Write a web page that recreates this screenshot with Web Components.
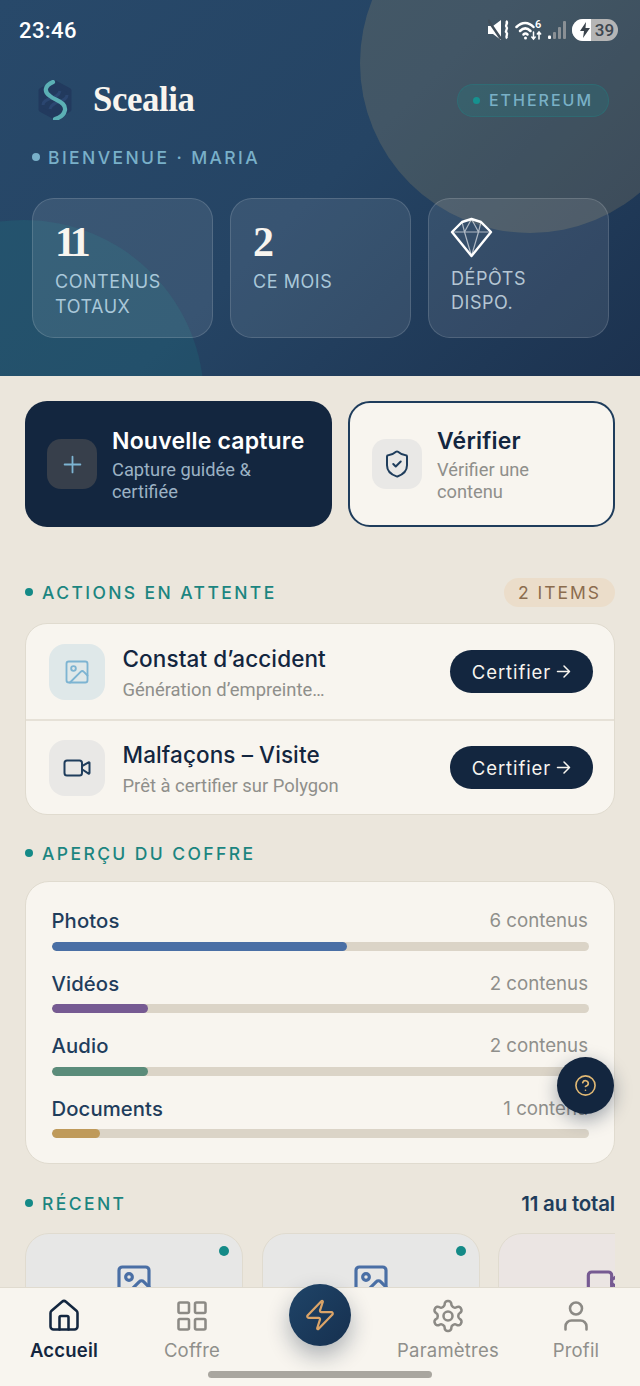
<!DOCTYPE html>
<html lang="fr">
<head>
<meta charset="utf-8">
<title>Scealia</title>
<style>
  html, body { margin: 0; padding: 0; background: #ebe6dc; }
  body { width: 640px; height: 1386px; overflow: hidden; font-family: Inter, sans-serif; }
  sc-actions { margin-top: 25px; }
  sc-section-head.first { margin-top: 51px; }
  sc-section-head.next { margin-top: 24px; }
  sc-section-head.last { margin-top: 25px; }
</style>
</head>
<body>
<sc-shell>
  <sc-hero slot="hero">
    <sc-stat value="11">CONTENUS<br>TOTAUX</sc-stat>
    <sc-stat value="2">CE MOIS</sc-stat>
    <sc-stat gem>DÉPÔTS<br>DISPO.</sc-stat>
  </sc-hero>

  <sc-actions>
    <sc-action variant="dark" icon="plus" title="Nouvelle capture">Capture guidée &amp;<br>certifiée</sc-action>
    <sc-action variant="light" icon="shield" title="Vérifier">Vérifier une<br>contenu</sc-action>
  </sc-actions>

  <sc-section-head class="first" label="ACTIONS EN ATTENTE"><sc-chip>2 ITEMS</sc-chip></sc-section-head>
  <sc-card class="pending">
    <sc-pending icon="image" tone="blue" title="Constat d’accident" sub="Génération d’empreinte…"></sc-pending>
    <sc-pending icon="video" tone="grey" title="Malfaçons – Visite" sub="Prêt à certifier sur Polygon" divided></sc-pending>
  </sc-card>

  <sc-section-head class="next" label="APERÇU DU COFFRE"></sc-section-head>
  <sc-vault>
    <sc-bar label="Photos" count="6 contenus" pct="55" color="#4a6fa5"></sc-bar>
    <sc-bar label="Vidéos" count="2 contenus" pct="18" color="#765a92"></sc-bar>
    <sc-bar label="Audio" count="2 contenus" pct="18" color="#5b8c7a"></sc-bar>
    <sc-bar label="Documents" count="1 contenu" pct="9" color="#bf9a5a"></sc-bar>
  </sc-vault>

  <sc-section-head class="last" label="RÉCENT"><sc-total>11 au total</sc-total></sc-section-head>
  <sc-recent>
    <sc-thumb icon="image" color="#4a6fa5" bg="#e7e7e6" dot></sc-thumb>
    <sc-thumb icon="image" color="#4a6fa5" bg="#e7e7e6" dot></sc-thumb>
    <sc-thumb icon="video" color="#765a92" bg="#ebe5e3" nudge="4"></sc-thumb>
  </sc-recent>

  <sc-help slot="overlay"></sc-help>
  <sc-nav slot="nav"></sc-nav>
</sc-shell>

<script>
const ICONS = {
  plus: '<path d="M5 12h14"/><path d="M12 5v14"/>',
  shield: '<path d="M20 13c0 5-3.5 7.5-7.66 8.95a1 1 0 0 1-.67-.01C7.5 20.5 4 18 4 13V6a1 1 0 0 1 1-1c2 0 4.5-1.2 6.24-2.72a1.17 1.17 0 0 1 1.52 0C14.51 3.81 17 5 19 5a1 1 0 0 1 1 1z"/><path d="m9 12 2 2 4-4"/>',
  image: '<rect x="3" y="3" width="18" height="18" rx="2"/><circle cx="9" cy="9" r="2"/><path d="m21 15-3.086-3.086a2 2 0 0 0-2.828 0L6 21"/>',
  video: '<path d="m16 13 5.223 3.482a.5.5 0 0 0 .777-.416V7.87a.5.5 0 0 0-.752-.432L16 10.5"/><rect x="2" y="6" width="14" height="12" rx="2"/>',
  home: '<path d="M15 21v-8a1 1 0 0 0-1-1h-4a1 1 0 0 0-1 1v8"/><path d="M3 10a2 2 0 0 1 .709-1.528l7-5.999a2 2 0 0 1 2.582 0l7 5.999A2 2 0 0 1 21 10v9a2 2 0 0 1-2 2H5a2 2 0 0 1-2-2z"/>',
  grid: '<rect x="3" y="3" width="7" height="7" rx="1"/><rect x="14" y="3" width="7" height="7" rx="1"/><rect x="14" y="14" width="7" height="7" rx="1"/><rect x="3" y="14" width="7" height="7" rx="1"/>',
  gear: '<path d="M12.22 2h-.44a2 2 0 0 0-2 2v.18a2 2 0 0 1-1 1.73l-.43.25a2 2 0 0 1-2 0l-.15-.08a2 2 0 0 0-2.73.73l-.22.38a2 2 0 0 0 .73 2.73l.15.1a2 2 0 0 1 1 1.72v.51a2 2 0 0 1-1 1.74l-.15.09a2 2 0 0 0-.73 2.73l.22.38a2 2 0 0 0 2.73.73l.15-.08a2 2 0 0 1 2 0l.43.25a2 2 0 0 1 1 1.73V20a2 2 0 0 0 2 2h.44a2 2 0 0 0 2-2v-.18a2 2 0 0 1 1-1.73l.43-.25a2 2 0 0 1 2 0l.15.08a2 2 0 0 0 2.73-.73l.22-.39a2 2 0 0 0-.73-2.73l-.15-.08a2 2 0 0 1-1-1.74v-.5a2 2 0 0 1 1-1.74l.15-.09a2 2 0 0 0 .73-2.73l-.22-.38a2 2 0 0 0-2.73-.73l-.15.08a2 2 0 0 1-2 0l-.43-.25a2 2 0 0 1-1-1.73V4a2 2 0 0 0-2-2z"/><circle cx="12" cy="12" r="3"/>',
  user: '<path d="M19 21v-2a4 4 0 0 0-4-4H9a4 4 0 0 0-4 4v2"/><circle cx="12" cy="7" r="4"/>',
  zap: '<path d="M4 14a1 1 0 0 1-.78-1.63l9.9-10.2a.5.5 0 0 1 .86.46l-1.92 6.02A1 1 0 0 0 13 10h7a1 1 0 0 1 .78 1.63l-9.9 10.2a.5.5 0 0 1-.86-.46l1.92-6.02A1 1 0 0 0 11 14z"/>',
  help: '<circle cx="12" cy="12" r="10"/><path d="M9.09 9a3 3 0 0 1 5.83 1c0 2-3 3-3 3"/><path d="M12 17h.01"/>'
};
const icon = (name, size, color, sw = 2) =>
  `<svg width="${size}" height="${size}" viewBox="0 0 24 24" fill="none" stroke="${color}" stroke-width="${sw}" stroke-linecap="round" stroke-linejoin="round" style="display:block">${ICONS[name]}</svg>`;

const define = (tag, render) => customElements.define(tag, class extends HTMLElement {
  constructor() { super(); this.attachShadow({ mode: 'open' }); }
  connectedCallback() { this.shadowRoot.innerHTML = render(this); }
});
const UI = 'Inter, sans-serif';
const SERIF = '"Liberation Serif", serif';

define('sc-shell', () => `<style>
  :host { display: flex; flex-direction: column; position: relative; width: 640px; height: 1386px; overflow: hidden; background: #ebe6dc; }
  main { flex: 1; min-height: 0; overflow: hidden; padding: 0 25px; display: flex; flex-direction: column; }
</style>
<slot name="hero"></slot>
<main><slot></slot></main>
<slot name="overlay"></slot>
<slot name="nav"></slot>`);

define('sc-status', () => `<style>
  :host { display: flex; align-items: center; justify-content: space-between; height: 60px; padding: 0 22px 0 19px; position: relative; }
  .time { font: 500 22px Roboto, sans-serif; color: #fff; letter-spacing: .4px; }
  .icons { display: flex; align-items: center; gap: 5px; }
  .batt { display: flex; width: 46px; height: 22px; border-radius: 11px; overflow: hidden; background: #b5b5b5; font: 500 17px Roboto, sans-serif; color: #3e4750; }
  .bolt { width: 19px; background: #fff; display: flex; align-items: center; justify-content: flex-end; }
  .pct { flex: 1; text-align: center; line-height: 22px; }
</style>
<span class="time">23:46</span>
<span class="icons">
  <svg width="22" height="22" viewBox="0 0 22 22" fill="#fff"><path d="M0 7h5l8-6v20l-8-6H0z"/><path d="M0 1l13 19" stroke="#414e5a" stroke-width="2.500"/><path d="M18 2c3 2.500-1.500 4 .5 6s-2 3.500 0 5.500-1.500 3.500.5 6" fill="none" stroke="#fff" stroke-width="2.400"/></svg>
  <svg width="28" height="22" viewBox="0 0 28 22" fill="none" stroke="#fff" stroke-width="2.500" stroke-linecap="round"><path d="M1.500 8c5.500-5.500 12-5.500 17 0"/><path d="M5 12c3.500-3.500 7-3.500 10.500 0"/><path d="M8.500 15.500c1.500-1.500 2.500-1.500 4 0"/><circle cx="10.500" cy="19" r="1.500" fill="#fff" stroke="none"/><path d="M18.500 13v7M16.800 18l1.700 2 1.700-2M24 20v-7M22.300 15l1.700-2 1.700 2" stroke-width="1.500"/><text x="20" y="9" font-family="Roboto, sans-serif" font-size="11" font-weight="600" fill="#fff" stroke="none">6</text></svg>
  <svg width="19" height="22" viewBox="0 0 19 22"><g fill="#8a9095"><rect x="5" y="13" width="3" height="7" rx="1"/><rect x="10" y="8" width="3" height="12" rx="1"/><rect x="15" y="2" width="3" height="18" rx="1"/></g><rect x="0" y="16.500" width="3" height="3.500" rx="1" fill="#fff"/></svg>
  <span class="batt"><span class="bolt"><svg width="12" height="16" viewBox="0 0 12 16" fill="#3a434c"><path d="M7 0 1 9h4l-1 7 7-10H6.500z"/></svg></span><span class="pct">39</span></span>
</span>`);

define('sc-logo', () => `<style>
  :host { display: flex; align-items: center; gap: 19px; }
  b { font: 700 34.800px ${SERIF}; color: #f8f5ef; letter-spacing: -.4px; }
</style>
<svg width="38" height="40" viewBox="0 0 38 40" fill="none">
  <path d="M19 3 33 10.500v19L19 37 5 29.500v-19z" fill="#223a5e" stroke="#223a5e" stroke-width="5" stroke-linejoin="round"/>
  <path d="M7 25c0-8 15-5 17-14M31 15c0 8-15 5-17 14" stroke="#2b4670" stroke-width="3"/>
  <path d="M17 2C8 6 8 12 14 16c6 5 16 6 15 14-1 5-6 8-10 9" stroke="#5bb0b5" stroke-width="4.200" stroke-linecap="round"/>
</svg>
<b>Scealia</b>`);

define('sc-hero', () => `<style>
  :host { display: block; position: relative; height: 376px; overflow: hidden; background: linear-gradient(135deg, #28496a 0%, #254464 50%, #1c324f 100%); }
  .gold { position: absolute; left: 360px; top: -107px; width: 340px; height: 340px; border-radius: 50%; background: rgba(200,170,110,.18); }
  .teal { position: absolute; left: -156px; top: 220px; width: 360px; height: 360px; border-radius: 50%; background: rgba(25,140,140,.18); }
  .content { position: relative; }
  .brand { display: flex; align-items: center; justify-content: space-between; height: 44px; margin: 18px 31px 0 36px; }
  .net { display: flex; align-items: center; gap: 9px; height: 33px; box-sizing: border-box; padding: 0 15px; border-radius: 17px; background: rgba(25,140,140,.2); border: 1px solid rgba(25,140,140,.28); font: 500 16px ${UI}; letter-spacing: 2px; color: #79b0c6; }
  .net i { width: 7px; height: 7px; border-radius: 50%; background: #16918f; }
  .hello { display: flex; align-items: center; gap: 8px; margin: 24px 32px 0; height: 22px; font: 500 17.500px ${UI}; letter-spacing: 2.400px; color: #79b0c9; }
  .hello i { width: 8px; height: 8px; border-radius: 50%; background: #79b0c9; }
  .stats { display: grid; grid-template-columns: repeat(3, 181px); gap: 17px; margin: 30px 32px 0; }
</style>
<div class="gold"></div><div class="teal"></div>
<div class="content">
  <sc-status></sc-status>
  <div class="brand"><sc-logo></sc-logo><span class="net"><i></i>ETHEREUM</span></div>
  <div class="hello"><i></i>BIENVENUE · MARIA</div>
  <div class="stats"><slot></slot></div>
</div>`);

define('sc-stat', el => `<style>
  :host { display: block; height: 140px; box-sizing: border-box; padding: 21px 22px 0; border-radius: 22px; background: rgba(255,255,255,.09); border: 1.5px solid rgba(255,255,255,.14); }
  .v { font: 700 42px/44px ${SERIF}; color: #f8f5ef; height: 44px; letter-spacing: -4px; }
  .l { font: 400 18px/24.500px ${UI}; letter-spacing: .55px; color: #a9c7d9; margin-top: 6px; }
  svg { display: block; margin: -3.500px 0 0 -1.500px; }
  .gem .l { margin-top: 9px; color: #b5c6d3; }
</style>
<div class="${el.hasAttribute('gem') ? 'gem' : ''}">
${el.hasAttribute('gem')
  ? `<svg width="43" height="41" viewBox="0 0 43 41" fill="none" stroke="#fff" stroke-linejoin="round"><path d="M2 15h39M12 5l2.500 10L21.500 39 28.500 15 31 5M14.500 15l7-13 7 13" stroke-width="1.200" opacity=".6"/><path d="M12 5l9.500-3L31 5l10 10-19.500 24L2 15z" stroke-width="2.400"/></svg>`
  : `<div class="v">${el.getAttribute('value')}</div>`}
<div class="l"><slot></slot></div>
</div>`);

define('sc-actions', () => `<style>
  :host { display: grid; grid-template-columns: 307px 267px; gap: 16px; height: 126px; flex: none; }
</style><slot></slot>`);

define('sc-action', el => {
  const dark = el.getAttribute('variant') === 'dark';
  return `<style>
  :host { display: flex; align-items: center; gap: 15px; box-sizing: border-box; padding: 0 ${dark ? 18 : 22}px 0 22px; border-radius: 22px; background: ${dark ? '#13263f' : '#f8f5ef'}; ${dark ? '' : 'border: 2px solid #1f3d5c;'} }
  .ic { flex: none; width: 50px; height: 50px; border-radius: 14px; display: grid; place-items: center; background: ${dark ? '#373f4b' : '#e9e8e6'}; }
  .txt { padding-top: 2px; }
  .t { font: 600 23px/28px ${UI}; color: ${dark ? '#fff' : '#13263f'}; letter-spacing: .2px; white-space: nowrap; }
  .s { font: 400 18.300px/22px Roboto, sans-serif; color: ${dark ? '#9cb2c4' : '#8f8f8b'}; margin-top: 4px; }
</style>
<span class="ic">${icon(el.getAttribute('icon'), dark ? 27 : 30, dark ? '#7db4d2' : '#1f3d5c', 1.6)}</span>
<span class="txt"><div class="t">${el.getAttribute('title')}</div><div class="s"><slot></slot></div></span>`;
});

define('sc-section-head', el => `<style>
  :host { display: flex; align-items: center; justify-content: space-between; height: 29px; flex: none; }
  .l { display: flex; align-items: center; gap: 9px; padding-bottom: 1px; font: 500 17.500px ${UI}; letter-spacing: 2.400px; color: #1b8580; }
  i { width: 8px; height: 8px; border-radius: 50%; background: #148a87; }
</style>
<span class="l"><i></i>${el.getAttribute('label')}</span><slot></slot>`);

define('sc-chip', () => `<style>
  :host { display: flex; align-items: center; justify-content: center; width: 111px; height: 29px; border-radius: 15px; background: #ebddca; color: #8b6c4e; font: 400 17.500px ${UI}; letter-spacing: 2px; }
</style><slot></slot>`);

define('sc-total', () => `<style>
  :host { font: 600 20.500px ${UI}; color: #1f3d5c; letter-spacing: -.2px; }
</style><slot></slot>`);

define('sc-card', () => `<style>
  :host { display: block; margin-top: 16px; height: 192px; flex: none; box-sizing: border-box; border-radius: 22px; background: #f8f5ef; border: 1.5px solid #e0dbcf; overflow: hidden; }
</style><slot></slot>`);

define('sc-pending', el => {
  const blue = el.getAttribute('tone') === 'blue';
  return `<style>
  :host { display: flex; align-items: center; height: 95px; box-sizing: border-box; padding: 0 21px 0 22.500px; ${el.hasAttribute('divided') ? 'border-top: 2px solid #e6e1d7;' : ''} }
  .ic { flex: none; width: 56px; height: 56px; border-radius: 16px; display: grid; place-items: center; background: ${blue ? '#dfe8e9' : '#e9e8e6'}; }
  .txt { flex: 1; margin-left: 18px; padding-top: 2px; }
  .t { font: 500 22.500px/28px ${UI}; color: #13263f; letter-spacing: .1px; white-space: nowrap; }
  .s { font: 400 18.400px/22px Roboto, sans-serif; color: #8f8f8b; margin-top: 6px; }
  .btn { flex: none; width: 143px; height: 43px; border-radius: 22px; background: #13263f; color: #f8f5ef; display: flex; align-items: center; justify-content: center; font: 400 18.500px ${UI}; gap: 5px; letter-spacing: .9px; }
</style>
<span class="ic">${icon(el.getAttribute('icon'), blue ? 28 : 30, blue ? '#7db4d2' : '#1f3d5c', 1.6)}</span>
<span class="txt"><div class="t">${el.getAttribute('title')}</div><div class="s">${el.getAttribute('sub')}</div></span>
<span class="btn">Certifier<svg width="15" height="15" viewBox="0 0 15 15" fill="none" stroke="#f8f5ef" stroke-width="1.500" stroke-linecap="round" stroke-linejoin="round"><path d="M1.500 7.500h12M8 2l5.500 5.500L8 13"/></svg></span>`;
});

define('sc-vault', () => `<style>
  :host { display: flex; flex-direction: column; margin-top: 13px; height: 283px; flex: none; box-sizing: border-box; padding: 25.500px 25px 0 25.500px; border-radius: 24px; background: #f8f5ef; border: 1.5px solid #e0dbcf; }
</style><slot></slot>`);

define('sc-bar', el => `<style>
  :host { display: block; height: 62.500px; }
  .r { display: flex; justify-content: space-between; align-items: center; height: 26px; }
  .n { font: 500 20.300px ${UI}; color: #1f3d5c; letter-spacing: .1px; }
  .c { font: 400 18.700px ${UI}; color: #8f8f8b; padding-right: 1px; }
  .t { margin-top: 8px; height: 9px; border-radius: 5px; background: #dbd4c7; overflow: hidden; }
  .f { height: 100%; border-radius: 5px; width: ${el.getAttribute('pct')}%; background: ${el.getAttribute('color')}; }
</style>
<div class="r"><span class="n">${el.getAttribute('label')}</span><span class="c">${el.getAttribute('count')}</span></div>
<div class="t"><div class="f"></div></div>`);

define('sc-recent', () => `<style>
  :host { display: flex; gap: 18.500px; margin: 15px -25px 0 0; padding-right: 25px; overflow: hidden; flex: none; height: 200px; clip-path: inset(0 25px 0 0); }
</style><slot></slot>`);

define('sc-thumb', el => `<style>
  :host { flex: none; position: relative; width: 218px; height: 180px; box-sizing: border-box; padding-top: 28px; padding-right: ${el.getAttribute('nudge') || 0}px; border-radius: 24px; display: flex; justify-content: center; background: ${el.getAttribute('bg')}; border: 1.5px solid #e0dbcf; }
  i { position: absolute; top: 12px; right: 13px; width: 10px; height: 10px; border-radius: 50%; background: #148a87; }
</style>
${el.hasAttribute('dot') ? '<i></i>' : ''}${icon(el.getAttribute('icon'), 40, el.getAttribute('color'), 1.9)}`);

define('sc-help', () => `<style>
  :host { position: absolute; left: 557px; top: 1057px; width: 57px; height: 57px; border-radius: 50%; background: #13263f; display: grid; place-items: center; box-shadow: 0 6px 18px rgba(19,38,63,.38); }
</style>${icon('help', 23, '#e0b874', 1.7)}`);

define('sc-nav-item', el => {
  const on = el.hasAttribute('active');
  return `<style>
  :host { display: flex; flex-direction: column; align-items: center; gap: 3.500px; padding-top: 10px; }
  span { font: ${on ? 600 : 400} 18.500px/24px ${UI}; color: ${on ? '#13263f' : '#8f8f8b'}; letter-spacing: .2px; }
</style>${icon(el.getAttribute('icon'), 36, on ? '#13263f' : '#8c8a85', 1.7)}<span>${el.getAttribute('label')}</span>`;
});

define('sc-nav', () => `<style>
  :host { display: grid; grid-template-columns: repeat(5, 128px); position: relative; flex: none; height: 99px; box-sizing: border-box; background: #f8f5ef; border-top: 1.5px solid #e0dbcf; }
  .zap { position: absolute; left: 289px; top: -4px; width: 62px; height: 62px; border-radius: 50%; display: grid; place-items: center; background: linear-gradient(135deg, #1f4468, #16304f); box-shadow: 0 10px 22px rgba(19,38,63,.32); }
  .bar { position: absolute; left: 208px; top: 83px; width: 224px; height: 7px; border-radius: 4px; background: #a9a69f; }
</style>
<sc-nav-item icon="home" label="Accueil" active></sc-nav-item>
<sc-nav-item icon="grid" label="Coffre"></sc-nav-item>
<span></span>
<sc-nav-item icon="gear" label="Paramètres"></sc-nav-item>
<sc-nav-item icon="user" label="Profil"></sc-nav-item>
<div class="zap">${icon('zap', 34, '#dba468', 1.6)}</div>
<div class="bar"></div>`);
</script>
</body>
</html>
